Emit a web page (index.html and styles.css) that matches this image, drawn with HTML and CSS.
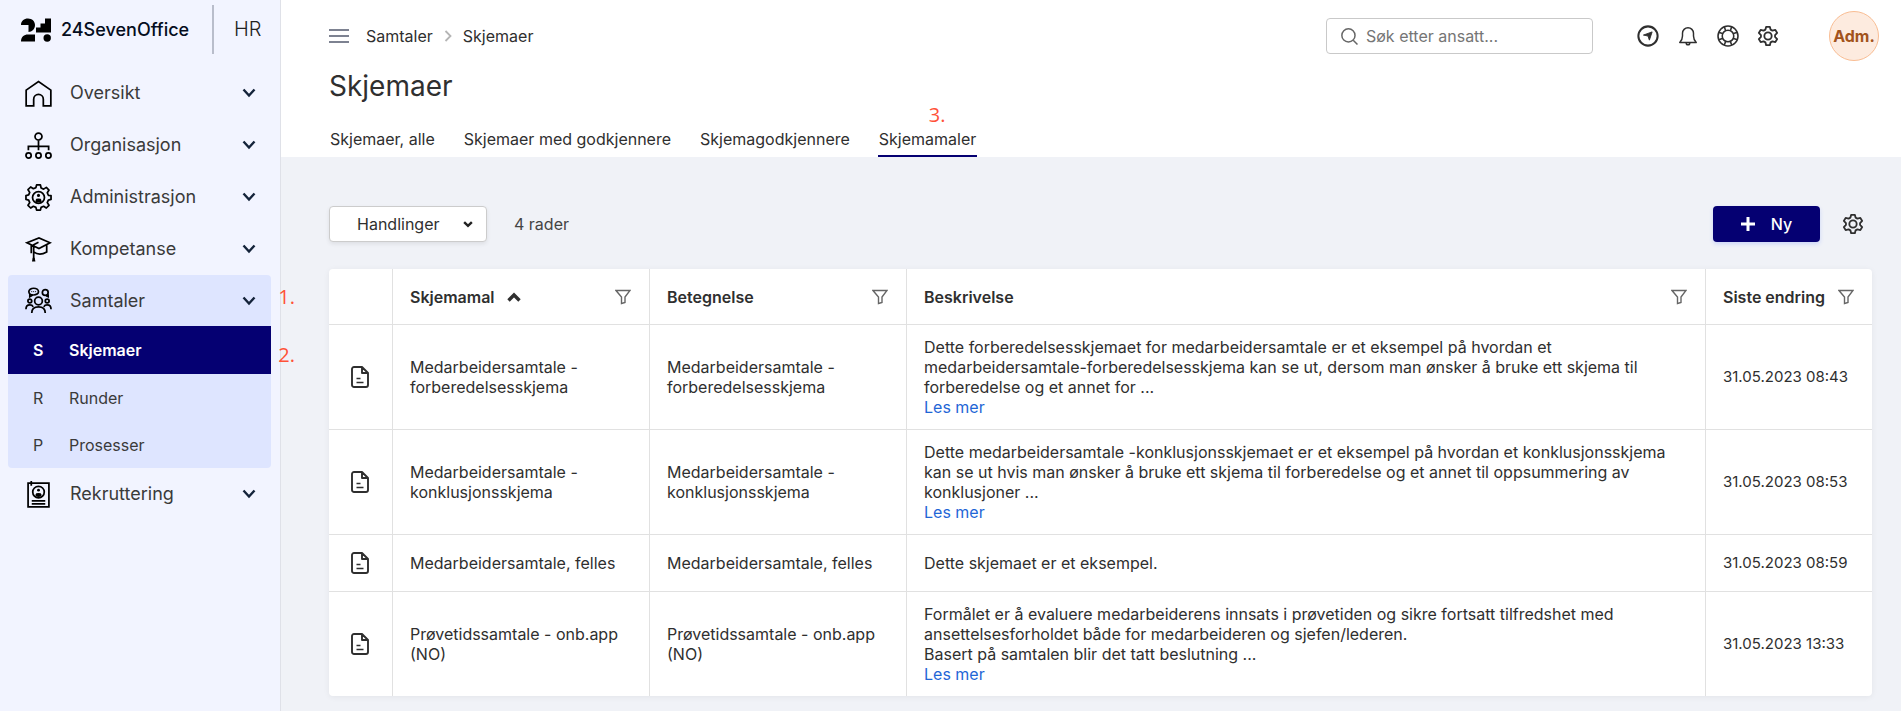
FILE: index.html
```html
<!DOCTYPE html>
<html lang="no">
<head>
<meta charset="UTF-8">
<title>Skjemaer</title>
<link rel="stylesheet" href="styles.css">
</head>
<body>

<!-- shared icons -->
<svg class="defs" aria-hidden="true">
	<symbol id="ic_chevron" viewBox="0 0 14 10"><path d="M1.500 1.500 7 7.500l5.500-6" fill="none" stroke="currentColor" stroke-width="2.400"/></symbol>
	<symbol id="ic_chevron_bold" viewBox="0 0 14 10"><path d="M1.500 1.500 7 7l5.500-5.500" fill="none" stroke="currentColor" stroke-width="3.400"/></symbol>
	<symbol id="ic_filter" viewBox="0 0 16 16"><path d="M1 1.500h14L10 8v5.500l-3.500 1V8z" fill="none" stroke="currentColor" stroke-width="1.400"/></symbol>
	<symbol id="ic_gear" viewBox="0 0 24 24"><path d="M10 2h4l.8 3 2 1.100L20 5.300l2 3.400L19.700 11v2l2.300 2.300-2 3.400-3.200-.8-2 1.100-.8 3h-4l-.8-3-2-1.100-3.200.8-2-3.400L4.300 13v-2L2 8.700l2-3.400 3.200.8 2-1.100z" fill="none" stroke="currentColor" stroke-width="2" stroke-linejoin="round"/><circle cx="12" cy="12" r="4" fill="none" stroke="currentColor" stroke-width="2"/></symbol>
	<symbol id="ic_doc" viewBox="0 0 18 22"><path d="M3 1h8l6 6v12a2 2 0 0 1-2 2H3a2 2 0 0 1-2-2V3a2 2 0 0 1 2-2zM11 1v6h6" fill="none" stroke="currentColor" stroke-width="1.900" stroke-linejoin="round"/><path d="M5.500 12.500h4M5.500 16.500h7" stroke="currentColor" stroke-width="1.500"/></symbol>
</svg>

<div class="page">
	<aside class="sidebar">
		<div class="brand">
			<svg class="brand_mark" viewBox="0 0 31 24"><path d="M1 7C1 3 4 .5 8 .5s7 2.800 7 6.500c0 4-3 7-6.500 7V7zM1 23.500C1 19 4 16.500 8 16.500h7v7zM25 .5h6v14H16V9.500h4.500V5.500H25z"/><circle cx="27.200" cy="20" r="3.700"/></svg>
			<span class="brand_name">24SevenOffice</span>
			<span class="brand_app">HR</span>
		</div>
		<nav class="menu">
			<button class="menu_item" type="button">
				<svg class="menu_icon" viewBox="0 0 28 28"><path d="M1.200 10.500 14 1.500l12.800 9v16.300H19V20a5 5 0 0 0-10 0v6.800H1.200z"/></svg>
				<span>Oversikt</span>
				<svg class="chevron"><use href="#ic_chevron"/></svg>
			</button>
			<button class="menu_item" type="button">
				<svg class="menu_icon" viewBox="0 0 28 28"><circle cx="14" cy="4.700" r="3.600"/><circle cx="3.700" cy="24.300" r="2.700"/><circle cx="14" cy="24.300" r="2.700"/><circle cx="24.300" cy="24.300" r="2.700"/><path d="M14 8.500V19M3.500 19v-4h21v4"/></svg>
				<span>Organisasjon</span>
				<svg class="chevron"><use href="#ic_chevron"/></svg>
			</button>
			<button class="menu_item" type="button">
				<svg class="menu_icon" viewBox="0 0 28 28"><path d="M12 1h4l.7 3.200 2.600 1.100 2.800-1.800 2.800 2.800-1.800 2.800 1.100 2.600L27 12v4l-2.800.7-1.100 2.600 1.800 2.800-2.800 2.800-2.800-1.800-2.600 1.100L16 27h-4l-.7-2.800-2.600-1.100-2.800 1.800-2.800-2.800 1.800-2.800-1.100-2.600L1 16v-4l2.800-.7 1.100-2.600-1.800-2.800 2.800-2.800 2.800 1.800 2.600-1.100z" stroke-linejoin="round"/><circle cx="14" cy="14" r="6.200"/><circle class="solid" cx="14" cy="11.800" r="1.600"/><path class="solid" d="M11 18.500v-2q0-1.500 3-1.500t3 1.500v2q-3 1.500-6 0z"/></svg>
				<span>Administrasjon</span>
				<svg class="chevron"><use href="#ic_chevron"/></svg>
			</button>
			<button class="menu_item" type="button">
				<svg class="menu_icon" viewBox="0 0 28 28"><path d="M2 7l12.500-5L26 7l-11.500 6zM6.500 9.500v8.500M14 6.500 9 9v15M9 16.500q6 4.500 13.500 0V9.500"/><path class="solid" d="M8 22.500h2l.8 4H7.200z"/></svg>
				<span>Kompetanse</span>
				<svg class="chevron"><use href="#ic_chevron"/></svg>
			</button>
			<div class="menu_group">
				<button class="menu_item" type="button" aria-expanded="true">
					<svg class="menu_icon" viewBox="0 0 28 28"><ellipse cx="9" cy="4.800" rx="5" ry="3.500"/><path d="M5 7v3l3-1.800M22 9l2 1V7.500"/><circle cx="21" cy="5.600" r="3"/><circle cx="14" cy="14.500" r="4"/><circle cx="5" cy="14.500" r="2"/><circle cx="23" cy="14.500" r="2"/><path d="M7 27q0-6.500 7-6.500t7 6.500M1 23q0-4.500 4-4.500 2.500 0 3.500 2M27 23q0-4.500-4-4.500-2.500 0-3.500 2"/><path d="M6.500 4.800h5" stroke-width="1" stroke-dasharray="1 1"/></svg>
					<span>Samtaler</span>
					<svg class="chevron"><use href="#ic_chevron"/></svg>
				</button>
				<a class="sub_item active" href="#"><span class="sub_letter">S</span>Skjemaer</a>
				<a class="sub_item" href="#"><span class="sub_letter">R</span>Runder</a>
				<a class="sub_item" href="#"><span class="sub_letter">P</span>Prosesser</a>
				<span class="step step1">1.</span>
				<span class="step step2">2.</span>
			</div>
			<button class="menu_item" type="button">
				<svg class="menu_icon" viewBox="0 0 28 28"><path d="M3.200 2.200h21.600v24.600H3.200zM6.500 0v5M7 20.500h14M7 23.700h14"/><circle cx="14" cy="11.500" r="6"/><circle class="solid" cx="14" cy="9.500" r="1.500"/><path class="solid" d="M11 15.500v-1.500q0-1.500 3-1.500t3 1.500v1.500q-3 2-6 0z"/></svg>
				<span>Rekruttering</span>
				<svg class="chevron"><use href="#ic_chevron"/></svg>
			</button>
		</nav>
	</aside>

	<main class="main">
		<header class="header">
			<div class="topbar">
				<button class="btn_icon burger" type="button" aria-label="Meny"><svg viewBox="0 0 20 14"><path d="M0 1h20M0 7h20M0 13h20" fill="none" stroke="currentColor" stroke-width="2"/></svg></button>
				<nav class="crumbs">
					<a href="#">Samtaler</a>
					<svg class="crumb_sep" viewBox="0 0 8 12"><path d="M1.500 1 6.500 6l-5 5" fill="none" stroke="currentColor" stroke-width="1.800"/></svg>
					<span>Skjemaer</span>
				</nav>
				<label class="search">
					<svg viewBox="0 0 16 16"><path d="M11.500 11.500 15.500 15.500" stroke="currentColor" stroke-width="1.400"/><circle cx="7" cy="7" r="6.200" fill="none" stroke="currentColor" stroke-width="1.400"/></svg>
					<input type="text" placeholder="Søk etter ansatt..." aria-label="Søk etter ansatt">
				</label>
				<div class="tools">
					<button class="btn_icon" type="button" aria-label="Snarveier"><svg viewBox="0 0 24 24"><circle cx="12" cy="12" r="10.500" fill="none" stroke="currentColor" stroke-width="2.200"/><path d="M16.500 7.500 13.500 16.500l-1.500-4.500L7 11z" fill="currentColor" stroke="currentColor" stroke-linejoin="round"/></svg></button>
					<button class="btn_icon" type="button" aria-label="Varsler"><svg viewBox="0 0 24 24"><path d="M3 19c2-2 3-3 3-7V9a6 6 0 0 1 12 0v3c0 4 1 5 3 7zM10 19.500a2 2 0 0 0 4 0" fill="none" stroke="currentColor" stroke-width="1.600" stroke-linejoin="round"/></svg></button>
					<button class="btn_icon" type="button" aria-label="Hjelp"><svg viewBox="0 0 24 24" fill="none" stroke="currentColor" stroke-width="1.700"><circle cx="12" cy="12" r="10.900"/><circle cx="12" cy="12" r="6.300"/><path d="M8 2 9.500 6.500M16 2l-1.500 4.500M8 22l1.500-4.500M16 22l-1.500-4.500M2 8l4.500 1.500M2 16l4.500-1.500M22 8l-4.500 1.500M22 16l-4.500-1.500"/></svg></button>
					<button class="btn_icon" type="button" aria-label="Innstillinger"><svg><use href="#ic_gear"/></svg></button>
				</div>
				<button class="avatar" type="button">Adm.</button>
			</div>
			<h1>Skjemaer</h1>
			<nav class="tabs">
				<a href="#">Skjemaer, alle</a>
				<a href="#">Skjemaer med godkjennere</a>
				<a href="#">Skjemagodkjennere</a>
				<a class="current" href="#">Skjemamaler<span class="step step3">3.</span></a>
			</nav>
		</header>

		<section class="content">
			<div class="actions">
				<button class="btn_actions" type="button">Handlinger <svg class="chevron"><use href="#ic_chevron_bold"/></svg></button>
				<span class="row_count">4 rader</span>
				<button class="btn_new" type="button"><svg viewBox="0 0 14 14"><path d="M7 0v14M0 7h14" stroke="currentColor" stroke-width="3"/></svg>Ny</button>
				<button class="btn_icon" type="button" aria-label="Kolonner"><svg><use href="#ic_gear"/></svg></button>
			</div>

			<table class="tbl_forms">
				<colgroup>
					<col class="col_icon"><col class="col_name"><col class="col_name"><col><col class="col_date">
				</colgroup>
				<thead>
					<tr>
						<th></th>
						<th><div class="th_in">Skjemamal <svg class="sort"><use href="#ic_chevron_bold"/></svg><svg class="filter"><use href="#ic_filter"/></svg></div></th>
						<th><div class="th_in">Betegnelse <svg class="filter"><use href="#ic_filter"/></svg></div></th>
						<th><div class="th_in">Beskrivelse <svg class="filter"><use href="#ic_filter"/></svg></div></th>
						<th><div class="th_in">Siste endring <svg class="filter"><use href="#ic_filter"/></svg></div></th>
					</tr>
				</thead>
				<tbody>
					<tr>
						<td class="cel_icon"><svg><use href="#ic_doc"/></svg></td>
						<td>Medarbeidersamtale - forberedelsesskjema</td>
						<td>Medarbeidersamtale - forberedelsesskjema</td>
						<td>Dette forberedelsesskjemaet for medarbeidersamtale er et eksempel på hvordan et<br>medarbeidersamtale-forberedelsesskjema kan se ut, dersom man ønsker å bruke ett skjema til<br>forberedelse og et annet for ...<br><a href="#">Les mer</a></td>
						<td class="cel_date">31.05.2023 08:43</td>
					</tr>
					<tr>
						<td class="cel_icon"><svg><use href="#ic_doc"/></svg></td>
						<td>Medarbeidersamtale - konklusjonsskjema</td>
						<td>Medarbeidersamtale - konklusjonsskjema</td>
						<td>Dette medarbeidersamtale -konklusjonsskjemaet er et eksempel på hvordan et konklusjonsskjema<br>kan se ut hvis man ønsker å bruke ett skjema til forberedelse og et annet til oppsummering av<br>konklusjoner ...<br><a href="#">Les mer</a></td>
						<td class="cel_date">31.05.2023 08:53</td>
					</tr>
					<tr>
						<td class="cel_icon"><svg><use href="#ic_doc"/></svg></td>
						<td>Medarbeidersamtale, felles</td>
						<td>Medarbeidersamtale, felles</td>
						<td>Dette skjemaet er et eksempel.</td>
						<td class="cel_date">31.05.2023 08:59</td>
					</tr>
					<tr>
						<td class="cel_icon"><svg><use href="#ic_doc"/></svg></td>
						<td>Prøvetidssamtale - onb.app (NO)</td>
						<td>Prøvetidssamtale - onb.app (NO)</td>
						<td>Formålet er å evaluere medarbeiderens innsats i prøvetiden og sikre fortsatt tilfredshet med<br>ansettelsesforholdet både for medarbeideren og sjefen/lederen.<br>Basert på samtalen blir det tatt beslutning ...<br><a href="#">Les mer</a></td>
						<td class="cel_date">31.05.2023 13:33</td>
					</tr>
				</tbody>
			</table>
		</section>
	</main>
</div>

</body>
</html>
```
FILE: styles.css
```css
* {
	box-sizing: border-box;
}
body {
	margin: 0;
	background-color: #f0f2f7;
	color: #2f2f2f;
	font-family: Inter, "Noto Sans", sans-serif;
	font-size: 16px;
	line-height: 20px;
}
a {
	color: inherit;
	text-decoration: none;
}
button {
	padding: 0;
	border: 0;
	background: none;
	color: inherit;
	font: inherit;
	cursor: pointer;
}
svg {
	display: block;
	flex: none;
}
.defs {
	display: none;
}
.page {
	display: flex;
	min-height: 100vh;
}

/* sidebar */
.sidebar {
	flex: none;
	width: 281px;
	padding: 0 9px 0 8px;
	border-right: 1px solid #dfe1e8;
	background-color: #f2f4ff;
}
.brand {
	display: flex;
	align-items: center;
	height: 59px;
	margin-bottom: 8px;
	padding-left: 12px;
	color: #050d20;
}
.brand_mark {
	width: 31px;
	height: 24px;
}
.brand_name {
	width: 161px;
	padding-left: 10px;
	font-size: 18px;
	font-weight: 500;
}
.brand_app {
	height: 49px;
	padding-left: 20px;
	border-left: 2px solid #b9bdcb;
	color: #222;
	font-size: 20px;
	font-weight: 300;
	line-height: 49px;
}
.menu_item {
	display: flex;
	align-items: center;
	width: 100%;
	height: 52px;
	padding: 0 15px 0 17px;
	color: #3a3a3a;
	font-size: 18px;
	text-align: left;
}
.menu_icon {
	width: 27px;
	height: 27px;
	margin-right: 18px;
	fill: none;
	stroke: #000;
	stroke-width: 1.8;
}
.menu_icon .solid {
	fill: #000;
	stroke: none;
}
.chevron {
	width: 14px;
	height: 10px;
	margin-left: auto;
	color: #14233a;
}
.menu_group {
	position: relative;
	border-radius: 4px;
	background-color: #dee5ff;
}
.menu_group .menu_item {
	height: 51px;
}
.sub_item {
	display: flex;
	align-items: center;
	height: 47px;
	color: #3a3a3a;
}
.sub_item.active {
	height: 48px;
	background-color: #050072;
	color: #fff;
	font-weight: 600;
}
.sub_letter {
	width: 61px;
	padding-left: 25px;
}

/* red step numbers */
.step {
	position: absolute;
	color: #ff5238;
	font-family: "Open Sans", sans-serif;
	font-size: 20px;
	font-weight: 400;
}
.step1 {
	right: -24px;
	top: 12px;
}
.step2 {
	right: -24px;
	top: 70px;
}
.step3 {
	left: 51px;
	top: -24px;
}

/* header */
.main {
	flex: 1;
	min-width: 0;
}
.header {
	height: 157px;
	padding: 0 22px 0 48px;
	background-color: #fff;
}
.topbar {
	display: flex;
	align-items: center;
	height: 72px;
}
.btn_icon svg {
	width: 22px;
	height: 22px;
}
.burger {
	color: #7d8291;
}
.burger svg {
	width: 20px;
	height: 14px;
}
.crumbs {
	display: flex;
	align-items: center;
	gap: 11px;
	margin-left: 17px;
}
.crumb_sep {
	width: 8px;
	height: 12px;
	color: #b5b5b5;
}
.search {
	display: flex;
	align-items: center;
	gap: 8px;
	width: 267px;
	height: 36px;
	margin-left: auto;
	padding-left: 14px;
	border: 1px solid #c9c9c9;
	border-radius: 4px;
	color: #666;
}
.search svg {
	width: 17px;
	height: 17px;
}
.search input {
	flex: 1;
	min-width: 0;
	padding: 0;
	border: 0;
	outline: 0;
	background: none;
	font: inherit;
}
.search input::placeholder {
	color: #757575;
}
.tools {
	display: flex;
	gap: 18px;
	margin: 0 50px 0 44px;
}
.avatar {
	width: 50px;
	height: 50px;
	border: 1px solid #f9bd93;
	border-radius: 50%;
	background-color: #fdebdf;
	color: #a2531c;
	font-weight: 700;
}
h1 {
	margin: 0;
	font-size: 28px;
	font-weight: 400;
	line-height: 28px;
}
.tabs {
	display: flex;
	gap: 27px;
	margin-top: 29px;
}
.tabs a {
	position: relative;
	height: 28px;
	padding: 0 1px;
}
.tabs .current {
	border-bottom: 2px solid #050072;
}

/* list */
.content {
	padding: 49px 29px 16px 48px;
}
.actions {
	display: flex;
	align-items: center;
	margin-bottom: 27px;
}
.btn_actions {
	display: flex;
	align-items: center;
	width: 158px;
	height: 36px;
	padding: 0 13px 0 27px;
	border: 1px solid #ccc;
	border-radius: 4px;
	background-color: #fff;
	box-shadow: 0 2px 4px rgba(0, 0, 0, 0.08);
}
.btn_actions .chevron {
	width: 10px;
	height: 7px;
	color: #222;
}
.row_count {
	margin-left: 27px;
	color: #444;
}
.btn_new {
	display: flex;
	align-items: center;
	justify-content: center;
	gap: 16px;
	width: 107px;
	height: 36px;
	margin: 0 22px 0 auto;
	border-radius: 4px;
	background-color: #050072;
	box-shadow: 0 2px 4px rgba(60, 100, 255, 0.2);
	color: #fff;
	font-weight: 500;
}
.btn_new svg {
	width: 14px;
	height: 14px;
}
.actions .btn_icon {
	margin-right: 8px;
}

.tbl_forms {
	width: 100%;
	table-layout: fixed;
	border-collapse: separate;
	border-spacing: 0;
	border-radius: 4px;
	background-color: #fff;
	box-shadow: 0 1px 6px rgba(0, 0, 0, 0.06);
}
.col_icon {
	width: 64px;
}
.col_name {
	width: 257px;
}
.col_date {
	width: 166px;
}
.tbl_forms th,
.tbl_forms td {
	height: 57px;
	padding: 12px 17px;
	border-right: 1px solid #e1e1e1;
	border-bottom: 1px solid #e1e1e1;
	text-align: left;
	vertical-align: middle;
}
.tbl_forms th {
	height: 56px;
	padding-right: 18px;
	font-weight: 600;
	white-space: nowrap;
}
.tbl_forms tr > :last-child {
	border-right: 0;
}
.tbl_forms tbody tr:last-child td {
	border-bottom: 0;
}
.tbl_forms td a {
	color: #1f66d6;
}
.th_in {
	display: flex;
	align-items: center;
}
.sort {
	width: 14px;
	height: 10px;
	margin-left: 12px;
	transform: rotate(180deg);
}
.filter {
	width: 16px;
	height: 16px;
	margin-left: auto;
	color: #666;
}
.cel_icon svg {
	width: 18px;
	height: 22px;
	margin-left: 5px;
}
.tbl_forms .cel_date {
	font-size: 15px;
	white-space: nowrap;
}
```
